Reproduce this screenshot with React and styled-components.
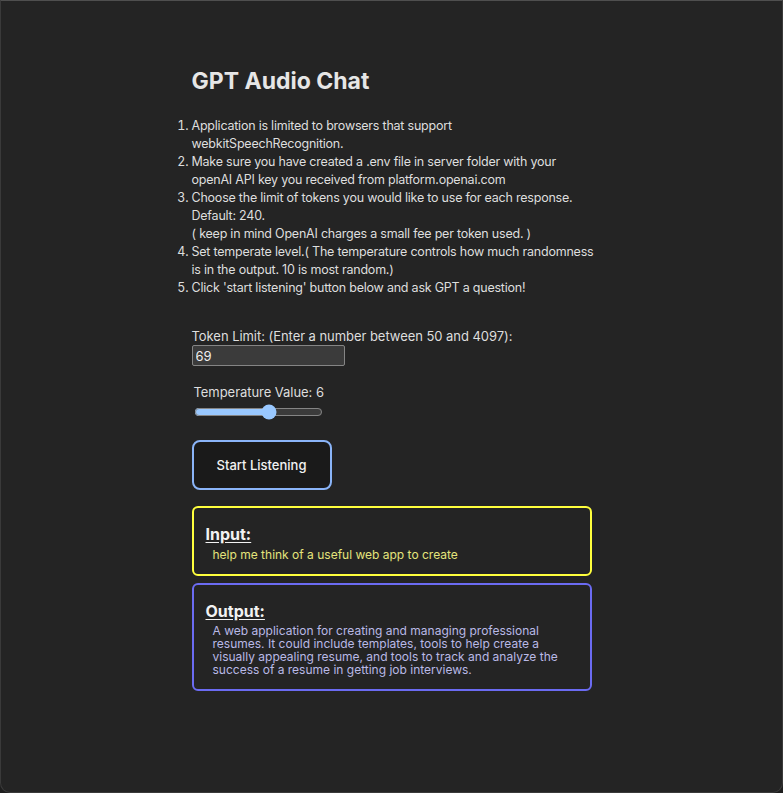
import { useState } from "react";
import styled, { createGlobalStyle } from "styled-components";

const GlobalStyle = createGlobalStyle`
	html, body {
		margin: 0;
		padding: 0;
		background: #1e1e1e;
	}
	body {
		font-family: Inter, "Noto Sans", "Liberation Sans", sans-serif;
		color: rgba(255, 255, 255, 0.87);
		color-scheme: dark;
		-webkit-font-smoothing: antialiased;
	}
`;

const Window = styled.div`
	box-sizing: border-box;
	height: 793px;
	background: #242424;
	border: 1px solid #3a3a3a;
	border-top-color: #4f4f4f;
	border-radius: 0 0 10px 10px;
	overflow: hidden;
`;

const Column = styled.main`
	width: 400px;
	margin: 0 auto;
	padding-top: 65px;
`;

const Title = styled.h1`
	margin: 0 0 21px;
	font-size: 23px;
	line-height: 30px;
	font-weight: 700;
	color: #e6e6e6;
`;

const Steps = styled.ol`
	margin: 0 -5px 30px 0;
	padding: 0;
	font-size: 12.5px;
	letter-spacing: -0.22px;
	line-height: 18px;
	color: #dedede;
`;

const Field = styled.div`
	display: flex;
	flex-direction: column;
	align-items: flex-start;
	padding-left: ${(p) => p.$indent || 0}px;
	margin-bottom: ${(p) => p.$gap || 0}px;
`;

const Label = styled.label`
	font-size: 13px;
	line-height: 18px;
	letter-spacing: -0.05px;
	color: #dedede;
`;

const NumberInput = styled.input`
	box-sizing: border-box;
	width: 153px;
	height: 21px;
	margin: 0;
	padding: 1px 3px;
	font-family: inherit;
	font-size: 13px;
	color: #f0f0f0;
	background: #3b3b3b;
	border: 1px solid #858585;
	border-radius: 2px;
	color-scheme: dark;
`;

const Slider = styled.input`
	width: 129px;
	margin: 3px 0 0;
	color-scheme: dark;
`;

const ListenButton = styled.button`
	box-sizing: border-box;
	width: 140px;
	height: 50px;
	margin: 0 0 16px;
	font-family: inherit;
	font-size: 13px;
	font-weight: 500;
	color: #f2f2f2;
	background: #1a1a1a;
	border: 2px solid #8ab4f8;
	border-radius: 8px;
	cursor: pointer;
`;

const Panel = styled.section`
	box-sizing: border-box;
	border: 2px solid ${(p) => p.$accent};
	border-radius: 6px;
	padding: 15px 12px ${(p) => p.$bottom}px;
	margin-bottom: 7px;
`;

const PanelTitle = styled.h3`
	margin: 0 0 1px;
	font-size: 16px;
	line-height: 22px;
	font-weight: 700;
	text-decoration: underline;
	text-underline-offset: 2px;
	color: #f2f2f2;
`;

const PanelText = styled.p`
	margin: ${(p) => (p.$dense ? 2 : 0)}px 0 0;
	padding: 0 9px 0 7px;
	font-size: 12px;
	line-height: ${(p) => (p.$dense ? 13 : 18)}px;
	color: ${(p) => p.$tone};
`;

const App = () => {
	const [tokens, setTokens] = useState("69");
	const [temperature, setTemperature] = useState(6);

	return (
		<>
			<GlobalStyle />
			<Window>
				<Column>
					<Title>GPT Audio Chat</Title>
					<Steps>
						<li>Application is limited to browsers that support webkitSpeechRecognition.</li>
						<li>
							Make sure you have created a .env file in server folder with your openAI API key you
							received from platform.openai.com
						</li>
						<li>
							Choose the limit of tokens you would like to use for each response.
							<br />
							Default: 240.
							<br />( keep in mind OpenAI charges a small fee per token used. )
						</li>
						<li>
							Set temperate level.( The temperature controls how much randomness is in the output. 10
							is most random.)
						</li>
						<li>Click 'start listening' button below and ask GPT a question!</li>
					</Steps>

					<Field $gap={17}>
						<Label htmlFor="tokens">Token Limit: (Enter a number between 50 and 4097):</Label>
						<NumberInput
							id="tokens"
							type="text"
							value={tokens}
							onChange={(e) => setTokens(e.target.value)}
						/>
					</Field>

					<Field $indent={2} $gap={20}>
						<Label htmlFor="temp">Temperature Value: {temperature}</Label>
						<Slider
							id="temp"
							type="range"
							min="0"
							max="10"
							value={temperature}
							onChange={(e) => setTemperature(Number(e.target.value))}
						/>
					</Field>

					<ListenButton>Start Listening</ListenButton>

					<Panel $accent="#ffff3d" $bottom={10}>
						<PanelTitle>Input:</PanelTitle>
						<PanelText $tone="#e4e47c">help me think of a useful web app to create</PanelText>
					</Panel>

					<Panel $accent="#6b6bf2" $bottom={13}>
						<PanelTitle>Output:</PanelTitle>
						<PanelText $dense $tone="#b9b9e6">
							A web application for creating and managing professional resumes. It could include
							templates, tools to help create a visually appealing resume, and tools to track and
							analyze the success of a resume in getting job interviews.
						</PanelText>
					</Panel>
				</Column>
			</Window>
		</>
	);
};

export default App;
